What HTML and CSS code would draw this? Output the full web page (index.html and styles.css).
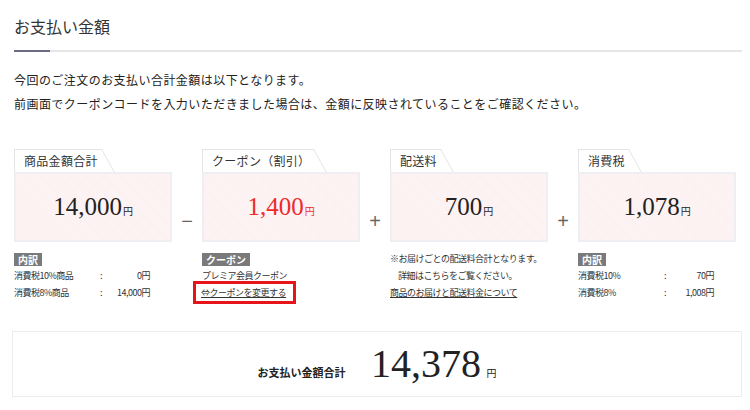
FILE: index.html
```html
<!DOCTYPE html>
<html lang="ja">

<head>
    <meta charset="UTF-8" />
    <meta name="viewport" content="width=device-width, initial-scale=1.0" />
    <title>お支払い金額</title>
    <link rel="stylesheet" href="styles.css">
</head>

<body>
    <div class="page">
        <div class="heading">
            <h1 class="title">お支払い金額</h1>
        </div>
        <div class="rule"></div>

        <p class="intro">
            今回のご注文のお支払い合計金額は以下となります。<br>
            前画面でクーポンコードを入力いただきました場合は、金額に反映されていることをご確認ください。
        </p>

        <div class="summary">
            <div class="item">
                <div class="tab">商品金額合計</div>
                <div class="amount-box">
                    <p class="price"><span class="num">14,000</span><span class="yen">円</span></p>
                </div>
                <div class="detail">
                    <span class="tag">内訳</span>
                    <dl class="breakdown">
                        <dt>消費税10%商品</dt><dd class="colon">:</dd><dd class="val">0円</dd>
                        <dt>消費税8%商品</dt><dd class="colon">:</dd><dd class="val">14,000円</dd>
                    </dl>
                </div>
            </div>

            <div class="op">−</div>

            <div class="item">
                <div class="tab">クーポン（割引）</div>
                <div class="amount-box">
                    <p class="price red"><span class="num">1,400</span><span class="yen">円</span></p>
                </div>
                <div class="detail">
                    <span class="tag">クーポン</span>
                    <p class="line">プレミア会員クーポン</p>
                    <p class="line"><a class="link marked" href="#">⇔クーポンを変更する</a></p>
                </div>
            </div>

            <div class="op">+</div>

            <div class="item">
                <div class="tab">配送料</div>
                <div class="amount-box">
                    <p class="price"><span class="num">700</span><span class="yen">円</span></p>
                </div>
                <div class="detail">
                    <p class="line">※お届けごとの配送料合計となります。</p>
                    <p class="line indent">詳細はこちらをご覧ください。</p>
                    <p class="line"><a class="link" href="#">商品のお届けと配送料金について</a></p>
                </div>
            </div>

            <div class="op">+</div>

            <div class="item">
                <div class="tab">消費税</div>
                <div class="amount-box">
                    <p class="price"><span class="num">1,078</span><span class="yen">円</span></p>
                </div>
                <div class="detail">
                    <span class="tag">内訳</span>
                    <dl class="breakdown">
                        <dt>消費税10%</dt><dd class="colon">:</dd><dd class="val">70円</dd>
                        <dt>消費税8%</dt><dd class="colon">:</dd><dd class="val">1,008円</dd>
                    </dl>
                </div>
            </div>
        </div>

        <div class="total">
            <p class="total-price">
                <span class="total-label">お支払い金額合計</span>
                <span class="total-num">14,378</span>
                <span class="total-yen">円</span>
            </p>
        </div>
    </div>
</body>

</html>
```

FILE: styles.css
```css
body {
    margin: 0;
    font-family: "Noto Sans CJK JP", sans-serif;
    color: #333;
    background-color: #fff;
}

.page {
    padding: 12px 8px 0 14px;
}

.heading {
    padding-bottom: 10px;
}

.title {
    margin: 0;
    font-size: 16px;
    font-weight: normal;
    line-height: 28px;
    color: #333;
}

.rule {
    height: 2px;
    background: linear-gradient(to right, #6b6a87 36px, #e6e6e8 36px);
}

.intro {
    margin: 16px 0 0;
    font-size: 12px;
    line-height: 24px;
    letter-spacing: 0.45px;
    color: #222;
}

/* cards */
.summary {
    display: grid;
    grid-template-columns: 158px 30px 158px 30px 158px 30px 158px;
    margin-top: 31px;
}

.tab {
    position: relative;
    isolation: isolate;
    display: inline-block;
    height: 22px;
    line-height: 22px;
    padding: 0 4px 0 9px;
    font-size: 12px;
    letter-spacing: 0.3px;
    color: #333;
    background-color: #fff;
    border-top: 1px solid #e4e4e8;
    border-left: 1px solid #e4e4e8;
}

.tab::after {
    content: "";
    position: absolute;
    top: -1px;
    right: 0;
    bottom: 0;
    width: 20px;
    background-color: #fff;
    border-top: 1px solid #e4e4e8;
    border-right: 1px solid #e4e4e8;
    transform: skewX(29deg);
    transform-origin: top right;
    z-index: -1;
}

.amount-box {
    height: 70px;
    box-sizing: border-box;
    border: 2px solid #efeef2;
    background-color: #fdf2f2;
    background-image: repeating-linear-gradient(45deg, #fcf0f0 0 1px, #fdf5f5 1px 2px);
    display: flex;
    align-items: center;
    justify-content: center;
}

.price {
    margin: 0;
    color: #222;
}

.price.red {
    color: #ee2a2a;
}

.num {
    font-family: "Liberation Serif", serif;
    font-size: 25px;
}

.yen {
    font-size: 10px;
    margin-left: 1px;
}

.op {
    padding-top: 60px;
    text-align: center;
    font-family: "Liberation Sans", sans-serif;
    font-size: 20px;
    line-height: 28px;
    color: #666;
}

/* details under the cards */
.detail {
    margin-top: 8px;
    font-size: 9px;
    letter-spacing: -0.5px;
    line-height: 17px;
    color: #333;
    white-space: nowrap;
}

.tag {
    display: inline-block;
    vertical-align: middle;
    padding: 0 4px;
    line-height: 13px;
    font-size: 10px;
    letter-spacing: 0;
    font-weight: bold;
    color: #fff;
    background-color: #7a7a7a;
}

.breakdown {
    display: grid;
    grid-template-columns: 86px 10px 40px;
    margin: 0;
}

.breakdown dd {
    margin: 0;
}

.breakdown .val {
    text-align: right;
}

.line {
    margin: 0;
}

.indent {
    padding-left: 8px;
}

.link {
    color: #333;
    text-decoration: underline;
}

.marked {
    display: inline-block;
    padding: 0 7px 0 5px;
    margin-left: -6px;
    outline: 3px solid #e8141b;
}

/* total */
.total {
    margin: 30px 0 0 -2px;
    height: 66px;
    box-sizing: border-box;
    border: 1px solid #ececec;
    display: flex;
    align-items: center;
    justify-content: center;
}

.total-price {
    margin: 0;
    color: #222;
}

.total-label {
    font-size: 11px;
    font-weight: bold;
    margin-right: 22px;
}

.total-num {
    font-family: "Liberation Serif", serif;
    font-size: 40px;
    line-height: 1;
}

.total-yen {
    font-size: 10px;
    margin-left: 2px;
}
```
